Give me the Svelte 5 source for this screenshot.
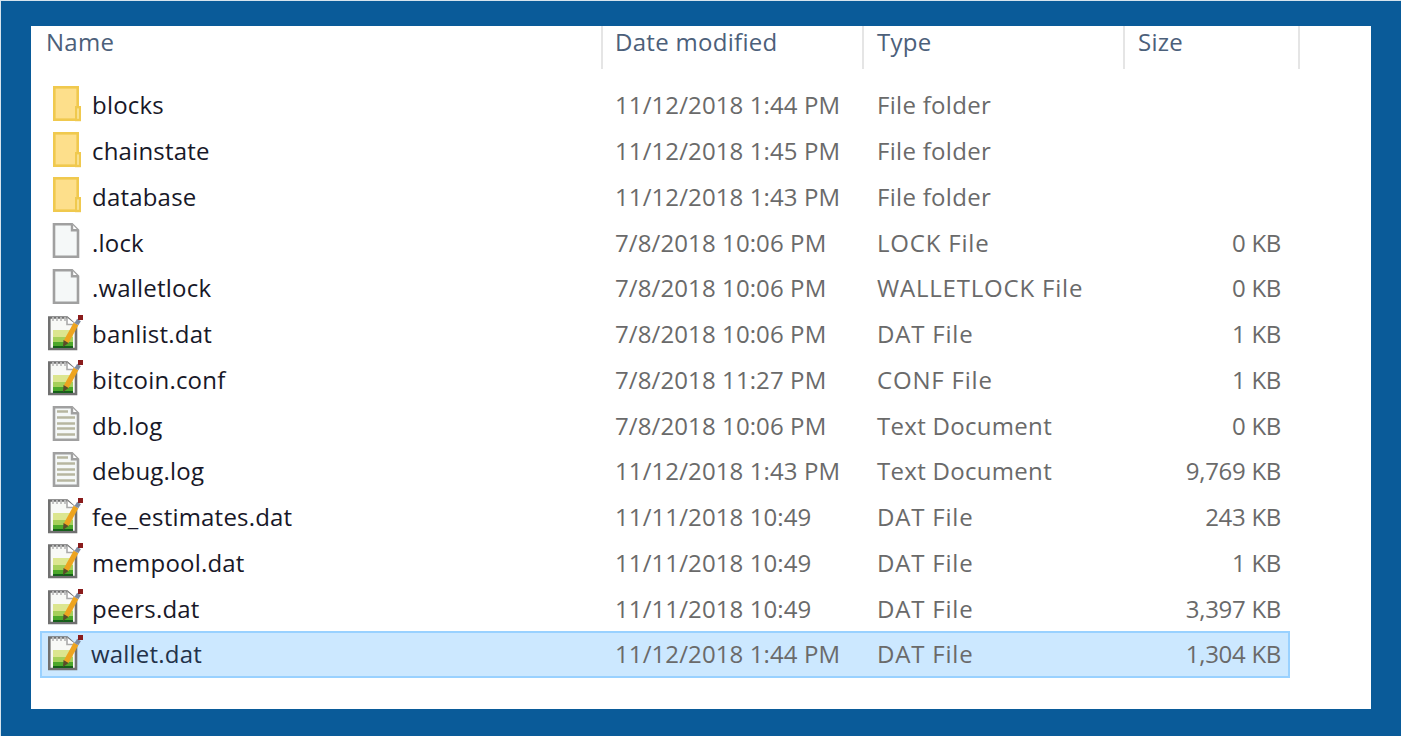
<script>
  const rows = [
    { icon: 'folder', name: 'blocks', date: '11/12/2018 1:44 PM', type: 'File folder', size: '' },
    { icon: 'folder', name: 'chainstate', date: '11/12/2018 1:45 PM', type: 'File folder', size: '' },
    { icon: 'folder', name: 'database', date: '11/12/2018 1:43 PM', type: 'File folder', size: '' },
    { icon: 'blank', name: '.lock', date: '7/8/2018 10:06 PM', type: 'LOCK File', size: '0 KB' },
    { icon: 'blank', name: '.walletlock', date: '7/8/2018 10:06 PM', type: 'WALLETLOCK File', size: '0 KB' },
    { icon: 'note', name: 'banlist.dat', date: '7/8/2018 10:06 PM', type: 'DAT File', size: '1 KB' },
    { icon: 'note', name: 'bitcoin.conf', date: '7/8/2018 11:27 PM', type: 'CONF File', size: '1 KB' },
    { icon: 'text', name: 'db.log', date: '7/8/2018 10:06 PM', type: 'Text Document', size: '0 KB' },
    { icon: 'text', name: 'debug.log', date: '11/12/2018 1:43 PM', type: 'Text Document', size: '9,769 KB' },
    { icon: 'note', name: 'fee_estimates.dat', date: '11/11/2018 10:49', type: 'DAT File', size: '243 KB' },
    { icon: 'note', name: 'mempool.dat', date: '11/11/2018 10:49', type: 'DAT File', size: '1 KB' },
    { icon: 'note', name: 'peers.dat', date: '11/11/2018 10:49', type: 'DAT File', size: '3,397 KB' },
    { icon: 'note', name: 'wallet.dat', date: '11/12/2018 1:44 PM', type: 'DAT File', size: '1,304 KB', selected: true }
  ];
  const columns = ['Name', 'Date modified', 'Type', 'Size'];
</script>

<div class="frame">
  <div class="panel">
    <div class="header">
      {#each columns as col}
        <div class="col">{col}</div>
      {/each}
    </div>
    <div class="list">
      {#each rows as row}
        <div class="row" class:selected={row.selected}>
          <div class="name">
            <span class="icon">
              {#if row.icon === 'folder'}
                <svg width="37" height="38" viewBox="0 0 37 38">
                  <rect x="7.300" y="1.300" width="23.400" height="32.400" fill="#fddf8b" stroke="#f0c94e" stroke-width="2.600" />
                  <rect x="29.200" y="21.200" width="3.600" height="12.800" fill="#fdf0bd" stroke="#f0c94e" stroke-width="2.400" />
                </svg>
              {:else if row.icon === 'blank' || row.icon === 'text'}
                <svg width="37" height="38" viewBox="0 0 37 38">
                  <path d="M7 1.300H25L31 7.300V33.700H7Z" fill="#f5f8f8" stroke="#a0a0a0" stroke-width="2.600" />
                  <path d="M25 1.300V7.300H31" fill="#fff" stroke="#a0a0a0" stroke-width="2.400" />
                  {#if row.icon === 'text'}
                    <path d="M10 5.500H21M10 11.500H28M10 17.500H28M10 22.500H28M10 28.500H28" stroke="#b7b6a0" stroke-width="2.400" />
                  {/if}
                </svg>
              {:else}
                <svg width="37" height="38" viewBox="0 0 37 38">
                  <path d="M2.300 2.500H20L29 10.500V34H2.300Z" fill="#f8f9f6" stroke="#707070" stroke-width="2.600" />
                  <path d="M20 2.500V9.500H29" fill="#fff" stroke="#aaa" stroke-width="1.600" />
                  <path d="M6 2V6M10 2V6M14 2V6M18 2V6" stroke="#bdbdbd" stroke-width="1.800" />
                  <rect x="6" y="15" width="20" height="7" fill="#dce68f" />
                  <rect x="6" y="22" width="20" height="5" fill="#a6d05a" />
                  <rect x="6" y="27" width="20" height="4" fill="#4ca82b" />
                  <rect x="6" y="31" width="20" height="2" fill="#16601a" />
                  <path d="M19 27L29 9" stroke="#eda41f" stroke-width="5.400" />
                  <path d="M16 32L16.500 25L21.500 28Z" fill="#5b4a2a" />
                  <path d="M29.500 9L32 5" stroke="#7d8ba0" stroke-width="4.400" />
                  <rect x="31" y="0" width="5" height="5" fill="#8a1c1c" />
                </svg>
              {/if}
            </span>
            <span class="label">{row.name}</span>
          </div>
          <div class="date">{row.date}</div>
          <div class="type" class:caps={/^[A-Z]{3,}/.test(row.type)}>{row.type}</div>
          <div class="size">{row.size}</div>
        </div>
      {/each}
    </div>
  </div>
</div>

<style>
  :global(body) {
    margin: 0;
    background: #0a5b99;
  }
  .frame {
    box-sizing: border-box;
    width: 1401px;
    height: 736px;
    padding: 26px 30px 27px 31px;
    background: #0a5b99;
    box-shadow: inset 1px 1px 0 #d6e4ee;
    font-family: "Open Sans", "Noto Sans", sans-serif;
    font-size: 24px;
  }
  .panel {
    height: 100%;
    background: #fff;
    overflow: hidden;
  }
  .header {
    display: grid;
    grid-template-columns: 572px 261px 261px 175px;
    height: 43px;
    color: #4c607a;
    letter-spacing: 0.3px;
  }
  .col {
    box-sizing: border-box;
    height: 43px;
    padding-left: 12px;
    border-right: 2px solid #e5e5e5;
    line-height: 32px;
  }
  .col:first-child {
    padding-left: 15px;
  }
  .col:nth-child(3),
  .col:nth-child(4) {
    padding-left: 13px;
  }
  .list {
    padding: 13px 0 0 9px;
  }
  .row {
    box-sizing: border-box;
    display: grid;
    grid-template-columns: 573px 262px 246px 158px;
    align-items: center;
    width: 1250px;
    height: 45.75px;
    color: #6a6a6a;
    border: 2px solid transparent;
  }
  .row.selected {
    height: 47px;
    padding-bottom: 1.250px;
    background: #cce8ff;
    border-color: #99d1ff;
  }
  .name {
    display: flex;
    align-items: center;
    color: #181828;
    letter-spacing: 0.2px;
  }
  .icon {
    display: flex;
    width: 45px;
    margin-left: 5px;
    filter: blur(0.35px);
  }
  .selected .name {
    color: #23324a;
  }
  .selected .label {
    margin-left: -1px;
  }
  .date {
    letter-spacing: 0.1px;
  }
  .type {
    letter-spacing: 0.3px;
    white-space: nowrap;
  }
  .type.caps {
    letter-spacing: 0.8px;
  }
  .size {
    text-align: right;
    letter-spacing: -0.3px;
  }
</style>
